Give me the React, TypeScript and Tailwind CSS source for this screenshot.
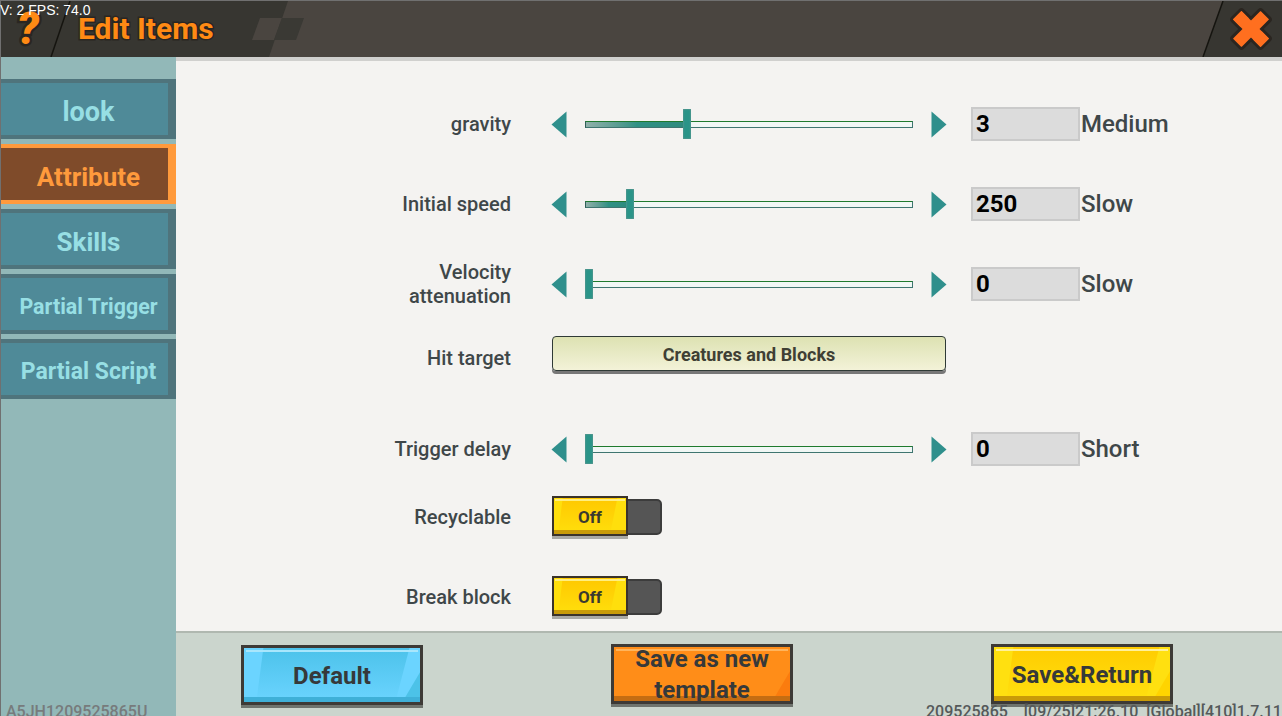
import React from 'react';

const font = { fontFamily: 'Roboto, "Liberation Sans", sans-serif' };

const tabs = [
  { label: 'look', size: 'text-[27px]', active: false },
  { label: 'Attribute', size: 'text-[26px]', active: true },
  { label: 'Skills', size: 'text-[26px]', active: false },
  { label: 'Partial Trigger', size: 'text-[21.4px]', active: false },
  { label: 'Partial Script', size: 'text-[23px]', active: false },
];

const Arrow = ({ dir }: { dir: 'left' | 'right' }) => (
  <svg width="16" height="27" viewBox="0 0 16 27" className="shrink-0">
    {dir === 'left' ? (
      <polygon points="15.5,0.5 15.5,26.5 0.5,13.5" fill="#2f8f8c" />
    ) : (
      <polygon points="0.5,0.5 0.5,26.5 15.5,13.5" fill="#2f8f8c" />
    )}
  </svg>
);

const Slider = ({ percent, thumb }: { percent: number; thumb: number }) => (
  <div className="flex items-center w-[396px] -ml-px">
    <Arrow dir="left" />
    <div className="relative w-[328px] h-[7px] ml-[18px] mr-[18px] shrink-0 bg-[#f0f7f5] border border-[#3f7570] border-t-[#1f7a2e] border-l-[#2f5f58]">
      <div
        className="h-full bg-gradient-to-r from-[#8fb0aa] via-[#2f9184] to-[#2f8a7e]"
        style={{ width: `${percent}px` }}
      />
      <div
        className="absolute top-[-13px] w-[8px] h-[30px] bg-[#2a9488] shadow-[inset_0_0_2px_#8a9a98]"
        style={{ left: `${thumb}px` }}
      />
    </div>
    <Arrow dir="right" />
  </div>
);

const Label = ({ children, extra = '' }: { children: React.ReactNode; extra?: string }) => (
  <div className={`w-[335px] text-right text-[20px] leading-[24px] font-medium text-[#3f4749] mr-[41px] ${extra}`}>
    {children}
  </div>
);

const SliderRow = ({ label, percent, thumb, value, unit, rowClass }: any) => (
  <div className={`flex items-center ${rowClass}`}>
    <Label>{label}</Label>
    <Slider percent={percent} thumb={thumb} />
    <div className="w-[109px] h-[34px] ml-[24px] bg-[#dcdcdc] border-2 border-[#cacaca] flex items-center pl-[3px] text-[24px] font-bold text-black">
      {value}
    </div>
    <div className="ml-[1px] text-[24px] font-medium text-[#3f4749]">{unit}</div>
  </div>
);

const ToggleRow = ({ label, rowClass }: any) => (
  <div className={`flex items-center ${rowClass}`}>
    <Label extra="mb-[1px]">{label}</Label>
    <div className="relative flex items-center w-[110px] h-[43px]">
      <div className="absolute left-[70px] top-[3px] w-[40px] h-[36px] bg-[#555555] border-2 border-[#3c3c3c] rounded-r-[5px]" />
      <div className="relative w-[76px] h-[40px] mb-[3px] pt-[4px] border-2 border-[#3a332b] shadow-[0_3px_0_#a9a9a5] bg-[#ffdf0c] flex items-center justify-center text-[17px] font-bold text-[#3a3a30] overflow-hidden">
        <div className="absolute inset-0 bg-gradient-to-b from-[#ffc800] to-transparent [clip-path:polygon(12%_0,88%_0,78%_100%,6%_100%)]" />
        <div className="absolute left-0 right-0 bottom-0 h-[4px] bg-[#c99b08]" />
        <div className="absolute left-[1px] right-[1px] top-[1px] h-[2px] bg-[#ffee80]" />
        <span className="relative">Off</span>
      </div>
    </div>
  </div>
);

const FooterButton = ({ children, bg, sheen, corner, bottom, top, mt }: any) => (
  <div className={`relative w-[182px] h-[60px] border-[3px] border-[#3d3a36] shadow-[0_3px_0_#6f746e] flex items-center justify-center text-center text-[24px] leading-[31px] pt-[2px] font-bold text-[#36393a] overflow-hidden ${bg} ${mt}`}>
    <div className={`absolute inset-0 bg-gradient-to-b to-transparent [clip-path:polygon(11%_0,94%_0,86%_100%,7%_100%)] ${sheen}`} />
    <div className={`absolute inset-0 [clip-path:polygon(100%_45%,100%_100%,90%_100%)] ${corner}`} />
    <div className={`absolute left-[2px] right-[2px] top-[2px] h-[2px] ${top}`} />
    <div className={`absolute left-0 right-0 bottom-0 h-[5px] ${bottom}`} />
    <span className="relative">{children}</span>
  </div>
);

export default function App() {
  return (
    <div className="relative w-[1282px] h-[716px] overflow-hidden bg-[#707070] flex flex-col pt-px pl-px" style={font}>
      {/* top bar */}
      <div className="relative h-[56px] shrink-0 bg-[#373631] overflow-hidden">
        <svg width="1281" height="56" viewBox="0 0 1281 56" className="absolute inset-0">
          <polygon points="287,0 1222,0 1202,56 268,56" fill="#4a4540" />
          <polygon points="259,17 281,17 273,39 251,39" fill="#4a4540" />
          <polygon points="281,17 303,17 295,39 273,39" fill="#3a3934" />
          <line x1="69" y1="0" x2="50" y2="56" stroke="#15140f" strokeWidth="1.5" />
          <line x1="1222" y1="0" x2="1202" y2="56" stroke="#15140f" strokeWidth="1.5" />
          <g transform="translate(1250 28) rotate(45)">
            <rect x="-21" y="-7.5" width="42" height="15" rx="2" fill="#ff6f1f" stroke="#2a2520" strokeWidth="3" />
            <rect x="-7.5" y="-21" width="15" height="42" rx="2" fill="#ff6f1f" stroke="#2a2520" strokeWidth="3" />
            <rect x="-19.5" y="-6" width="39" height="12" fill="#ff6f1f" />
          </g>
        </svg>
        <div className="absolute left-[16px] top-[2px] text-[44px] leading-[52px] font-black italic text-[#ff8a14] [-webkit-text-stroke:5px_#2a2622] [paint-order:stroke_fill]">
          ?
        </div>
        <div className="absolute left-[77px] top-[10px] text-[30px] leading-[36px] font-bold text-[#ff8a14] [-webkit-text-stroke:3px_#2a2622] [paint-order:stroke_fill]">
          Edit Items
        </div>
      </div>
      <div className="h-[4px] shrink-0 bg-[#d0d0ce]" />

      <div className="flex flex-1 min-h-0">
        {/* side tabs */}
        <div className="w-[175px] shrink-0 -mt-[4px] pt-[22px] bg-[#92b8b8] flex flex-col gap-[5px]">
          {tabs.map(t =>
            t.active ? (
              <div
                key={t.label}
                className={`h-[60px] pl-[8px] pt-[7px] bg-[#7f4b2a] border-y-4 border-r-8 border-[#ff9a3c] flex items-center justify-center font-bold text-[#ff9a3c] ${t.size}`}
              >
                {t.label}
              </div>
            ) : (
              <div
                key={t.label}
                className={`h-[60px] pl-[8px] pt-[7px] bg-[#4f8a98] border-y-4 border-r-8 border-[#4f747c] flex items-center justify-center font-bold text-[#97dfe4] ${t.size}`}
              >
                {t.label}
              </div>
            )
          )}
        </div>

        <div className="flex-1 flex flex-col min-w-0 bg-[#f4f3f1]">
          {/* settings rows */}
          <div className="flex-1 min-h-0 pt-[46px]">
            <SliderRow label="gravity" percent={102} thumb={97} value="3" unit="Medium" rowClass="h-[34px]" />
            <SliderRow label="Initial speed" percent={45} thumb={40} value="250" unit="Slow" rowClass="h-[34px] mt-[46px]" />
            <SliderRow label={<>Velocity<br />attenuation</>} percent={0} thumb={-1} value="0" unit="Slow" rowClass="h-[34px] mt-[46px]" />
            <div className="flex items-start h-[38px] mt-[35px]">
              <Label extra="pt-[10px]">Hit target</Label>
              <div className="w-[394px] h-[35px] pt-[2px] rounded-[4px] border border-[#2f3a36] shadow-[0_3px_0_#777] bg-gradient-to-b from-[#dde2b2] to-[#f3f2d8] flex items-center justify-center text-[18px] font-bold text-[#3f3f34]">
                Creatures and Blocks
              </div>
            </div>
            <SliderRow label="Trigger delay" percent={0} thumb={-1} value="0" unit="Short" rowClass="h-[34px] mt-[58px]" />
            <ToggleRow label="Recyclable" rowClass="h-[43px] mt-[30px]" />
            <ToggleRow label="Break block" rowClass="h-[43px] mt-[37px]" />
          </div>

          {/* bottom actions */}
          <div className="h-[85px] shrink-0 bg-[#cbd5cd] border-t-2 border-[#b0b8b0] flex items-start pl-[65px] pt-[11px]">
            <FooterButton
              bg="bg-[#6bd4ff]"
              sheen="from-[#4cc2ea]"
              corner="bg-[#4cc2e8]"
              top="bg-[#a8e6fc]"
              bottom="bg-[#3fb0d8]"
              mt="mt-[1px]"
            >
              Default
            </FooterButton>
            <FooterButton
              bg="ml-[188px] bg-[#ff8d18]"
              sheen="from-[#ff8d18]"
              corner="bg-[#fb7c0e]"
              top="bg-[#ffb45c]"
              bottom="bg-[#c56d12]"
            >
              Save as new template
            </FooterButton>
            <FooterButton
              bg="ml-[198px] bg-[#ffe010]"
              sheen="from-[#ffcc00]"
              corner="bg-[#ffd400]"
              top="bg-[#fff09a]"
              bottom="bg-[#c99b08]"
            >
              Save&amp;Return
            </FooterButton>
          </div>
        </div>
      </div>

      {/* debug overlays */}
      <div className="absolute left-0 top-[2px] text-white text-[14px] leading-[16px]" style={{ fontFamily: '"Liberation Sans", sans-serif' }}>
        V: 2 FPS: 74.0
      </div>
      <div className="absolute left-[6px] top-[704px] text-[16px] leading-[16px] font-medium text-[#777b7c] whitespace-pre">
        A5JH1209525865U
      </div>
      <div className="absolute left-[926px] top-[704px] text-[16px] leading-[16px] font-medium text-[#55595a] whitespace-pre">
        209525865    [09/25]21:26.10  [Global][410]1.7.11
      </div>
    </div>
  );
}
